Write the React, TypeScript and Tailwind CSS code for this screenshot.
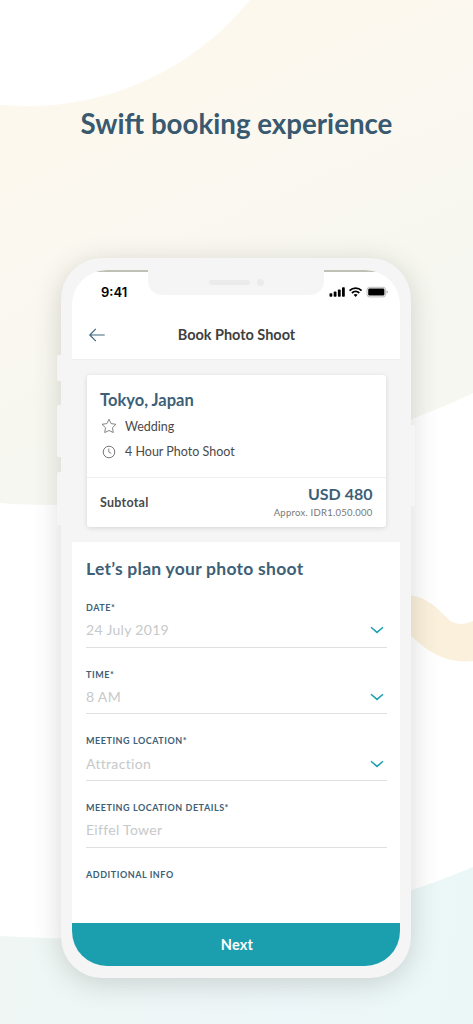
import React from "react";

type FieldProps = {
  label: string;
  value?: string;
  select?: boolean;
};

const fields: FieldProps[] = [
  { label: "DATE*", value: "24 July 2019", select: true },
  { label: "TIME*", value: "8 AM", select: true },
  { label: "MEETING LOCATION*", value: "Attraction", select: true },
  { label: "MEETING LOCATION DETAILS*", value: "Eiffel Tower" },
];

const Backdrop = () => (
  <svg
    className="absolute inset-0 h-full w-full"
    viewBox="0 0 473 1024"
    aria-hidden="true"
  >
    <defs>
      <linearGradient id="sand" gradientUnits="userSpaceOnUse" x1="140" y1="60" x2="300" y2="420">
        <stop offset="0" stopColor="#fdf8ed" />
        <stop offset="0.35" stopColor="#fbf8f0" />
        <stop offset="0.7" stopColor="#f7f7f0" />
        <stop offset="1" stopColor="#f5f7f0" />
      </linearGradient>
      <linearGradient id="mist" gradientUnits="userSpaceOnUse" x1="0" y1="940" x2="473" y2="1000">
        <stop offset="0" stopColor="#eff6f4" />
        <stop offset="0.6" stopColor="#edf6f8" />
        <stop offset="1" stopColor="#ebf7f7" />
      </linearGradient>
    </defs>
    <path d="M0 0H473V393C440 409 400 424 340 446C240 484 130 513 0 503Z" fill="url(#sand)" />
    <circle cx="28" cy="-179" r="285" fill="#fff" />
    <path d="M400 596C421 592 435 606 446 617C455 626 463 625 473 621V661C447 664 430 652 419 643C411 636 410 634 400 631Z" fill="#fbf0dc" />
    <path d="M0 936C130 943 240 939 340 911C390 898 430 885 473 867V1024H0Z" fill="url(#mist)" />
  </svg>
);

const SideButtons = () => (
  <>
    <span className="absolute -left-[4px] top-[97px] h-[26px] w-[6px] rounded-l-[2px] bg-[#f5f5f5]" />
    <span className="absolute -left-[4px] top-[147px] h-[52px] w-[6px] rounded-l-[2px] bg-[#f5f5f5]" />
    <span className="absolute -left-[4px] top-[214px] h-[53px] w-[6px] rounded-l-[2px] bg-[#f5f5f5]" />
    <span className="absolute -right-[4px] top-[167px] h-[81px] w-[6px] rounded-r-[2px] bg-[#f5f5f5]" />
  </>
);

const StatusIcons = () => (
  <svg className="h-[12px] w-[60px]" viewBox="0 0 60 12" aria-hidden="true">
    {/* Signal */}
    <rect x="0.5" y="7.3" width="2.8" height="3.5" rx="0.8" />
    <rect x="4.7" y="5.6" width="2.8" height="5.2" rx="0.8" />
    <rect x="8.9" y="3.5" width="2.8" height="7.3" rx="0.8" />
    <rect x="13" y="1.3" width="2.8" height="9.5" rx="0.8" />
    {/* Wifi */}
    <g fill="none" stroke="#000" strokeWidth="1.8">
      <path d="M20.6 4.6a8.6 8.6 0 0 1 12 0" />
      <path d="M22.9 7a5.3 5.3 0 0 1 7.4 0" />
    </g>
    <path d="M24.6 8.8a3 3 0 0 1 4 0l-2 2.2z" />
    {/* Battery */}
    <rect x="38" y="1.3" width="18.6" height="9.6" rx="2.6" fill="none" stroke="#b4b4b4" strokeWidth="0.9" />
    <rect x="39.2" y="2.6" width="16.2" height="7" rx="1.3" />
    <path d="M57.6 4.6v3c.8-.2 1.2-.8 1.2-1.5s-.4-1.3-1.2-1.5z" fill="#a6a6a6" />
  </svg>
);

const Field = ({ label, value, select }: FieldProps) => (
  <div className="h-[66.7px]">
    <div className="h-[13px] text-[9px] font-bold leading-[13px] tracking-[0.54px] text-[#3d5f77]">
      {label}
    </div>
    {value && (
      <div className="flex h-[33.5px] items-center justify-between border-b border-[#dde0e0] pr-[3px]">
        <span className="text-[14px] leading-[20px] tracking-[0.32px] text-[#c6c9c9]">{value}</span>
        {select && (
          <svg className="h-[8px] w-[14px]" viewBox="0 0 14 8" fill="none" aria-hidden="true">
            <path d="M1 1.2L7 6.4L13 1.2" stroke="#1b9fb2" strokeWidth="1.5" />
          </svg>
        )}
      </div>
    )}
  </div>
);

const App = () => {
  return (
    <div className="relative h-[1024px] w-[473px] overflow-hidden bg-white font-['Lato',sans-serif]">
      <Backdrop />

      <div className="relative flex flex-col items-center">
        <h1 className="mt-[104px] h-[40px] whitespace-nowrap text-[27.7px] font-bold leading-[40px] text-[#38596f]">
          Swift booking experience
        </h1>

        {/* Phone body */}
        <div className="relative mr-[1px] mt-[114px] h-[719.5px] w-[350px] rounded-[41px] bg-[#f5f5f5] px-[11px] pb-[12px] pt-[12px] shadow-[0_5px_28px_rgba(50,60,45,0.2)]">
          <SideButtons />

          {/* Screen */}
          <div className="relative flex h-full w-full flex-col overflow-hidden rounded-[35px] bg-white">
            <div className="h-[2px] shrink-0 bg-[#bfc1b7]" />

            {/* Notch */}
            <div className="absolute left-[76px] top-0 flex h-[24.5px] w-[176px] items-center rounded-b-[14px] bg-[#f5f5f5]">
              <span className="ml-[61px] h-[5.5px] w-[41px] rounded-full bg-[#ebebeb]" />
              <span className="ml-[7px] h-[6.5px] w-[6.5px] rounded-full bg-[#ebebeb]" />
            </div>

            <div className="flex h-[40px] shrink-0 items-center justify-between pl-[29px] pr-[11px]">
              <span className="font-['Inter',sans-serif] text-[13px] font-semibold leading-[16px] text-black">
                9:41
              </span>
              <StatusIcons />
            </div>

            <header className="relative flex h-[47.5px] shrink-0 items-center justify-center border-b border-[#efefef]">
              <svg className="absolute left-[17px] top-[16px] h-[14px] w-[16px]" viewBox="0 0 16 14" fill="none" aria-hidden="true">
                <path d="M15.7 7H0.8M6.8 0.8L0.8 7L6.8 13.2" stroke="#3f657f" strokeWidth="1.2" />
              </svg>
              <span className="ml-[1px] text-[14.5px] font-bold leading-[20px] tracking-[-0.03px] text-[#3f3f3f]">
                Book Photo Shoot
              </span>
            </header>

            <section className="h-[182.5px] shrink-0 bg-[#f5f5f5] px-[14.5px] pt-[15.5px]">
              <div className="h-[152px] rounded-[3px] bg-white text-[#4a4a4a] shadow-[0_1px_5px_rgba(0,0,0,0.13)]">
                <div className="h-[102.5px] border-b border-[#efefef] px-[13.5px] pt-[12.5px]">
                  <h2 className="text-[16.5px] font-bold leading-[24px] text-[#3d5f77]">
                    Tokyo, Japan
                  </h2>
                  <div className="mt-[2px] flex h-[25.5px] items-center text-[12.5px]">
                    <svg className="ml-[1px] mr-[8px] h-[16px] w-[16px]" viewBox="0 0 16 16" fill="none" aria-hidden="true">
                      <path d="M8 1.2L10.1 5.6L15 6.3L11.5 9.7L12.3 14.5L8 12.5L3.7 14.5L4.5 9.7L1 6.3L5.9 5.6Z" stroke="#777" strokeWidth="0.9" strokeLinejoin="round" />
                    </svg>
                    <span className="pt-[2px]">Wedding</span>
                  </div>
                  <div className="flex h-[25.5px] items-center text-[12.5px]">
                    <svg className="ml-[1px] mr-[8px] h-[16px] w-[16px]" viewBox="0 0 16 16" fill="none" aria-hidden="true">
                      <circle cx="8" cy="8" r="5.8" stroke="#777" strokeWidth="1" />
                      <path d="M7.8 4.5V8L10.2 9.3" stroke="#777" strokeWidth="0.9" />
                    </svg>
                    <span className="pt-[2px]">4 Hour Photo Shoot</span>
                  </div>
                </div>
                <div className="flex h-[49.5px] items-center justify-between pl-[13.5px] pr-[13px]">
                  <span className="pt-[2px] text-[12.5px] font-bold tracking-[0.25px]">Subtotal</span>
                  <div className="flex flex-col items-end">
                    <span className="-mt-[1px] mb-[1px] text-[16px] font-bold leading-[20px] text-[#3d5f77]">USD 480</span>
                    <span className="text-[9.5px] leading-[15px] tracking-[0.25px] text-[#777]">
                      Approx. IDR1.050.000
                    </span>
                  </div>
                </div>
              </div>
            </section>

            <section className="flex-1 pl-[14px] pr-[13.5px] pt-[14px]">
              <h2 className="h-[45px] text-[17.5px] font-bold leading-[26px] tracking-[0.26px] text-[#3d5f77]">
                Let’s plan your photo shoot
              </h2>
              {fields.map((field) => (
                <Field key={field.label} {...field} />
              ))}
              <div className="text-[9px] font-bold leading-[13px] tracking-[0.54px] text-[#3d5f77]">
                ADDITIONAL INFO
              </div>
            </section>

            <button
              type="button"
              className="h-[43px] w-full shrink-0 bg-[#1b9eae] pl-[2px] pt-[2px] text-[14.5px] font-bold tracking-[0.2px] text-white"
            >
              Next
            </button>
          </div>
        </div>
      </div>
    </div>
  );
};

export default App;
